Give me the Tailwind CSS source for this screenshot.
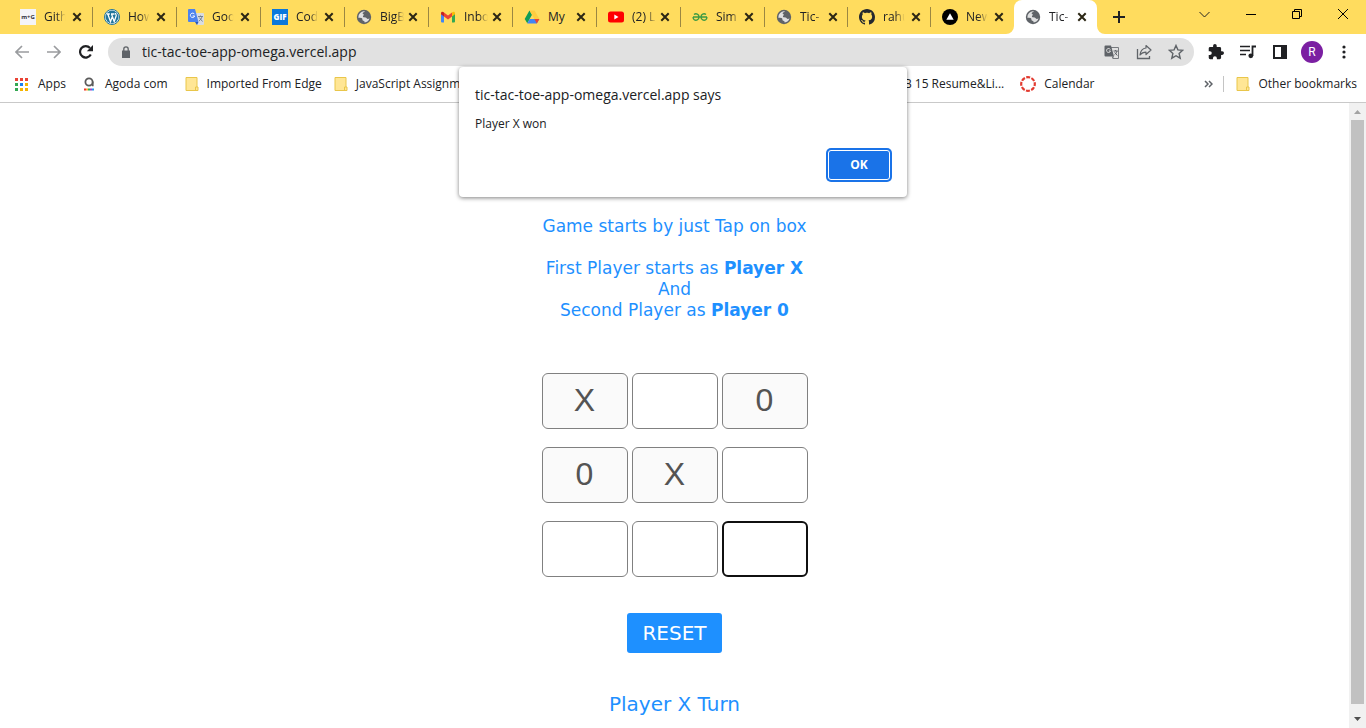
<!DOCTYPE html>
<html lang="en">
<head>
<meta charset="utf-8">
<meta name="viewport" content="width=device-width, initial-scale=1">
<title>Tic-Tac-Toe</title>
<script src="https://cdn.jsdelivr.net/npm/@tailwindcss/browser@4"></script>
</head>
<body class="relative flex h-screen flex-col overflow-hidden bg-white font-['Open_Sans',sans-serif] text-xs text-[#202124]">

<!-- Shared symbols -->
<svg class="hidden" aria-hidden="true">
  <symbol id="close" viewBox="0 0 10 10"><path d="M1.3 1.3l7.4 7.4M8.700 1.300l-7.400 7.400" stroke="#2b2614" stroke-width="2" fill="none"/></symbol>
  <symbol id="globe" viewBox="0 0 16 16"><circle cx="8" cy="8" r="7.200" fill="#5f6368"/><path d="M9 2.400C8.300 3.300 6.700 3.100 6.600 4.300c0 .9 1.200.7 1.200 1.500 0 .7-.9.8-.9 1.700 0 .8.900.9 2.200.9 1.200 0 1.700.6 1.900 1.400 1 .3 1.800 0 2.500-.5a5.700 5.700 0 0 1-4.900 4.300c.1-.9-.2-1.300-.7-1.600-.7-.4-1.600-.5-1.500-1.500 0-.8-.1-1.300-1-1.600-.9-.2-2-.2-3.100-.2A5.800 5.800 0 0 1 9 2.400z" fill="#fff" fill-opacity=".8"/></symbol>
  <symbol id="folder" viewBox="0 0 14 16"><path d="M1 1.500h11v9.500h1v3.500H1z" fill="#ffe695" stroke="#e9c64b"/><path d="M10.500 14.500v-3.500H12" fill="none" stroke="#e9c64b"/></symbol>
</svg>

<!-- Tab strip -->
<header class="flex h-[34px] shrink-0 items-stretch bg-[#ffdc5e] pl-[9px]">
  <nav class="flex shrink-0" aria-label="Tabs">
    <div class="flex w-21 items-center pl-[11px]">
      <svg class="size-4 shrink-0" viewBox="0 0 16 16"><path d="M0 0h16v16H0z" fill="#f4f4f8"/><text x="8" y="10" font-family="Open Sans" font-size="6" font-weight="700" text-anchor="middle" fill="#333340">m+G</text></svg>
      <a href="#" class="ml-2 w-6 overflow-hidden whitespace-nowrap [mask-image:linear-gradient(to_right,black_50%,transparent_90%)]">Gith</a>
      <button class="ml-1 shrink-0" aria-label="Close tab"><svg class="size-[10px]"><use href="#close"/></svg></button>
      <i class="ml-auto h-5 w-px bg-[#9b8742]"></i>
    </div>
    <div class="flex w-21 items-center pl-[11px]">
      <svg class="size-4 shrink-0" viewBox="0 0 16 16"><circle cx="8" cy="8" r="7.500" fill="#fff" stroke="#21759b"/><circle cx="8" cy="8" r="6.500" fill="#21759b"/><path d="M2.800 5h3M7 5h3.500M3.800 5l2.700 7.600L8 8.300M7.500 5l2.700 7.600 2-5.900c.3-1-.9-1.500-.6-2.700" fill="none" stroke="#fff" stroke-width="1.300"/></svg>
      <a href="#" class="ml-2 w-6 overflow-hidden whitespace-nowrap [mask-image:linear-gradient(to_right,black_50%,transparent_90%)]">How</a>
      <button class="ml-1 shrink-0" aria-label="Close tab"><svg class="size-[10px]"><use href="#close"/></svg></button>
      <i class="ml-auto h-5 w-px bg-[#9b8742]"></i>
    </div>
    <div class="flex w-21 items-center pl-[11px]">
      <svg class="size-4 shrink-0" viewBox="0 0 16 16"><path d="M6 4h9a1 1 0 0 1 1 1v10a1 1 0 0 1-1 1H9z" fill="#d9dce0"/><path d="M1 0h6l3.500 13H1a1 1 0 0 1-1-1V1a1 1 0 0 1 1-1z" fill="#4c83ee"/><path d="M9 16l1.500-3H7z" fill="#2457bd"/><path d="M6.500 5.200A2.200 2.200 0 1 0 6.700 7H4.600" fill="none" stroke="#fff"/><path d="M10 7.500h5M12.500 6.500v1M14 7.500c-.5 2-1.500 3.300-3 4.500M11.300 8.500l3.200 4" fill="none" stroke="#6b7a8c" stroke-width=".9"/></svg>
      <a href="#" class="ml-2 w-6 overflow-hidden whitespace-nowrap [mask-image:linear-gradient(to_right,black_60%,transparent_90%)]">Goo</a>
      <button class="ml-1 shrink-0" aria-label="Close tab"><svg class="size-[10px]"><use href="#close"/></svg></button>
      <i class="ml-auto h-5 w-px bg-[#9b8742]"></i>
    </div>
    <div class="flex w-21 items-center pl-[11px]">
      <svg class="size-4 shrink-0" viewBox="0 0 16 16"><path d="M0 0h16v16H0z" fill="#0a78dc"/><text x="8" y="11" font-family="Open Sans" font-size="8" font-weight="800" text-anchor="middle" fill="#fff">GIF</text></svg>
      <a href="#" class="ml-2 w-6 overflow-hidden whitespace-nowrap [mask-image:linear-gradient(to_right,black_60%,transparent_90%)]">Cod</a>
      <button class="ml-1 shrink-0" aria-label="Close tab"><svg class="size-[10px]"><use href="#close"/></svg></button>
      <i class="ml-auto h-5 w-px bg-[#9b8742]"></i>
    </div>
    <div class="flex w-21 items-center pl-[11px]">
      <svg class="size-4 shrink-0"><use href="#globe"/></svg>
      <a href="#" class="ml-2 w-6 overflow-hidden whitespace-nowrap [mask-image:linear-gradient(to_right,black_65%,transparent)]">BigB</a>
      <button class="ml-1 shrink-0" aria-label="Close tab"><svg class="size-[10px]"><use href="#close"/></svg></button>
      <i class="ml-auto h-5 w-px bg-[#9b8742]"></i>
    </div>
    <div class="flex w-21 items-center pl-[11px]">
      <svg class="size-4 shrink-0" viewBox="0 0 16 16"><path d="M1 4.500l3 2.200V13.500H2a1 1 0 0 1-1-1z" fill="#4285f4"/><path d="M15 4.500l-3 2.200V13.500h2a1 1 0 0 0 1-1z" fill="#34a853"/><path d="M4 3.500l4 3 4-3v4l-4 3-4-3z" fill="#ea4335"/><path d="M1 4.200C1 2.700 2.700 2.200 4 3.500v4L1 5.300z" fill="#c5221f"/><path d="M15 4.200c0-1.500-1.700-2-3-.7v4l3-2.200z" fill="#fbbc04"/></svg>
      <a href="#" class="ml-2 w-6 overflow-hidden whitespace-nowrap [mask-image:linear-gradient(to_right,black_60%,transparent)]">Inbo</a>
      <button class="ml-1 shrink-0" aria-label="Close tab"><svg class="size-[10px]"><use href="#close"/></svg></button>
      <i class="ml-auto h-5 w-px bg-[#9b8742]"></i>
    </div>
    <div class="flex w-21 items-center pl-[11px]">
      <svg class="size-4 shrink-0" viewBox="0 0 16 16"><path d="M5.500 1.500L8 5.800 3.300 14.300.7 10z" fill="#0f9d58"/><path d="M5.500 1.500h5L15.400 10h-5z" fill="#ffcd40"/><path d="M5.700 10h9.700l-2.600 4.500H3.200z" fill="#4285f4"/><path d="M10.400 10h5l-2.600 4.500z" fill="#ea4335"/></svg>
      <a href="#" class="ml-2 w-6 whitespace-nowrap">My</a>
      <button class="ml-1 shrink-0" aria-label="Close tab"><svg class="size-[10px]"><use href="#close"/></svg></button>
      <i class="ml-auto h-5 w-px bg-[#9b8742]"></i>
    </div>
    <div class="flex w-21 items-center pl-[11px]">
      <svg class="size-4 shrink-0" viewBox="0 0 16 16"><rect y="2.500" width="16" height="11" rx="2.500" fill="#f00"/><path d="M6.300 5.500v5l4.200-2.500z" fill="#fff"/></svg>
      <a href="#" class="ml-2 w-6 overflow-hidden whitespace-nowrap [mask-image:linear-gradient(to_right,black_60%,transparent)]">(2) L</a>
      <button class="ml-1 shrink-0" aria-label="Close tab"><svg class="size-[10px]"><use href="#close"/></svg></button>
      <i class="ml-auto h-5 w-px bg-[#9b8742]"></i>
    </div>
    <div class="flex w-21 items-center pl-[11px]">
      <svg class="size-4 shrink-0" viewBox="0 0 16 16"><path d="M1 8h14M2 5.500c2-1.500 5-.5 5 2.500s-3 4-5 2.500C1.400 10 1.100 9 1.100 8M14 5.500c-2-1.500-5-.5-5 2.500s3 4 5 2.500c.6-.5.9-1.500.9-2.500" fill="none" stroke="#3c9a43" stroke-width="1.400"/></svg>
      <a href="#" class="ml-2 w-6 overflow-hidden whitespace-nowrap [mask-image:linear-gradient(to_right,black_60%,transparent)]">Sim</a>
      <button class="ml-1 shrink-0" aria-label="Close tab"><svg class="size-[10px]"><use href="#close"/></svg></button>
      <i class="ml-auto h-5 w-px bg-[#9b8742]"></i>
    </div>
    <div class="flex w-[83px] items-center pl-[11px]">
      <svg class="size-4 shrink-0"><use href="#globe"/></svg>
      <a href="#" class="ml-2 w-6 overflow-hidden whitespace-nowrap [mask-image:linear-gradient(to_right,black_60%,transparent)]">Tic-</a>
      <button class="ml-1 shrink-0" aria-label="Close tab"><svg class="size-[10px]"><use href="#close"/></svg></button>
      <i class="ml-auto h-5 w-px bg-[#9b8742]"></i>
    </div>
    <div class="flex w-[83px] items-center pl-[11px]">
      <svg class="size-4 shrink-0" viewBox="0 0 16 16"><path fill="#24292f" d="M8 0C3.580 0 0 3.580 0 8c0 3.540 2.290 6.530 5.470 7.590.4.070.55-.17.55-.38 0-.19-.01-.82-.01-1.490-2.010.37-2.530-.49-2.690-.94-.09-.23-.48-.94-.82-1.130-.28-.15-.68-.52-.01-.53.63-.01 1.080.58 1.230.82.720 1.210 1.870.87 2.330.66.070-.52.280-.87.510-1.070-1.780-.2-3.640-.89-3.640-3.950 0-.87.310-1.590.820-2.150-.08-.2-.36-1.020.080-2.120 0 0 .67-.21 2.200.82.640-.18 1.320-.27 2-.27s1.360.09 2 .27c1.530-1.040 2.200-.82 2.200-.82.440 1.100.160 1.920.080 2.120.510.560.820 1.270.820 2.150 0 3.070-1.870 3.750-3.650 3.950.290.250.540.730.540 1.480 0 1.070-.01 1.930-.01 2.200 0 .21.150.46.550.38A8.010 8.010 0 0 0 16 8c0-4.420-3.580-8-8-8z"/></svg>
      <a href="#" class="ml-2 w-6 overflow-hidden whitespace-nowrap [mask-image:linear-gradient(to_right,black_50%,transparent_90%)]">rahu</a>
      <button class="ml-1 shrink-0" aria-label="Close tab"><svg class="size-[10px]"><use href="#close"/></svg></button>
      <i class="ml-auto h-5 w-px bg-[#9b8742]"></i>
    </div>
    <div class="relative flex w-[83px] items-center pl-[11px]">
      <svg class="size-4 shrink-0" viewBox="0 0 16 16"><circle cx="8" cy="8" r="8" fill="#000"/><path d="M8 4.300l3.700 6.400H4.300z" fill="#fff"/></svg>
      <a href="#" class="ml-2 w-6 overflow-hidden whitespace-nowrap [mask-image:linear-gradient(to_right,black_50%,transparent_90%)]">New</a>
      <button class="ml-1 shrink-0" aria-label="Close tab"><svg class="size-[10px]"><use href="#close"/></svg></button>
      <svg class="absolute right-0 bottom-0 size-2" viewBox="0 0 8 8"><path d="M8 0v8H0a8 8 0 0 0 8-8z" fill="#fff"/></svg>
    </div>
    <div class="relative flex w-[83px] items-center rounded-t-lg bg-white pl-[11px]">
      <svg class="size-4 shrink-0"><use href="#globe"/></svg>
      <a href="#" class="ml-2 w-6 overflow-hidden whitespace-nowrap [mask-image:linear-gradient(to_right,black_60%,transparent)]">Tic-</a>
      <button class="ml-1 shrink-0" aria-label="Close tab"><svg class="size-[10px]"><use href="#close"/></svg></button>
      <svg class="absolute bottom-0 left-full size-2" viewBox="0 0 8 8"><path d="M0 0v8h8a8 8 0 0 1-8-8z" fill="#fff"/></svg>
    </div>
  </nav>
  <button class="ml-4 flex items-center" aria-label="New tab"><svg class="size-3" viewBox="0 0 12 12"><path d="M6 0v12M0 6h12" stroke="#202124" stroke-width="2"/></svg></button>
  <div class="ml-auto flex h-7 items-center gap-9 pr-[18px]">
    <button aria-label="Search tabs"><svg class="size-[11px]" viewBox="0 0 11 11"><path d="M.5 3l5 5 5-5" fill="none" stroke="#222"/></svg></button>
    <button aria-label="Minimize"><svg class="size-[10px]" viewBox="0 0 10 10"><path d="M0 5.500h10" stroke="#000"/></svg></button>
    <button aria-label="Restore"><svg class="size-[10px]" viewBox="0 0 10 10"><path d="M.5 2.500h7v7h-7zM2.500 2.500v-2h7v7h-2" fill="none" stroke="#000"/></svg></button>
    <button aria-label="Close window"><svg class="size-[10px]" viewBox="0 0 10 10"><path d="M0 0l10 10M10 0L0 10" stroke="#000"/></svg></button>
  </div>
</header>

<!-- Toolbar -->
<div class="flex h-9 shrink-0 items-center pr-4 pl-[15px]">
  <button aria-label="Back"><svg class="size-[14px]" viewBox="0 0 14 14"><path d="M14 7H1.500M7 1L1 7l6 6" fill="none" stroke="#9a9c9f" stroke-width="1.700"/></svg></button>
  <button class="ml-[18px]" aria-label="Forward"><svg class="size-[14px]" viewBox="0 0 14 14"><path d="M0 7h12.500M7 1l6 6-6 6" fill="none" stroke="#9a9c9f" stroke-width="1.700"/></svg></button>
  <button class="ml-[18px]" aria-label="Reload"><svg class="size-[14px]" viewBox="0 0 14 14"><path d="M11.800 9.500A5.700 5.700 0 1 1 11 3" fill="none" stroke="#202124" stroke-width="2.200"/><path d="M14 0v6.200H7.800z" fill="#202124"/></svg></button>
  <div class="ml-[15px] flex h-7 flex-1 items-center rounded-full bg-[#e1e1e1] pr-[10px] pl-[14px]">
    <svg class="h-3 w-2 shrink-0" viewBox="0 0 8 12"><path d="M0 4.500h8V12H0z" fill="#5f6368"/><path d="M1.800 5V3a2.200 2.200 0 0 1 4.400 0v2" fill="none" stroke="#5f6368" stroke-width="1.300"/></svg>
    <input aria-label="Address" value="tic-tac-toe-app-omega.vercel.app" class="ml-3 min-w-0 flex-1 bg-transparent text-sm outline-none">
    <div class="flex items-center gap-4">
      <button aria-label="Translate"><svg class="size-4" viewBox="0 0 16 16"><path d="M6 3.500h8.500v11H9" fill="none" stroke="#777a7e"/><path d="M1.500 1.500h5.500l3 11H1.500a1 1 0 0 1-1-1v-9a1 1 0 0 1 1-1z" fill="#5f6368"/><path d="M8 12.500h2l-1.500 2.500z" fill="#5f6368"/><path d="M6.300 5.500A2 2 0 1 0 6.500 7H4.800" fill="none" stroke="#e1e1e1"/><path d="M9.500 7h4.300M11.600 6v1M13 7c-.4 1.800-1.500 3-2.500 3.800M10.700 8.300l2.600 3.200" fill="none" stroke="#5f6368"/></svg></button>
      <button aria-label="Share"><svg class="size-4" viewBox="0 0 16 16"><path d="M1.500 5v9.500h12V12" fill="none" stroke="#5f6368" stroke-width="1.300"/><path d="M10 1.500L15 6l-5 4.500V8.200C7.200 8.200 5.500 9 4 11c.4-3.500 2.300-6.600 6-7z" fill="none" stroke="#5f6368" stroke-width="1.200" stroke-linejoin="round"/></svg></button>
      <button aria-label="Bookmark"><svg class="size-4" viewBox="0 0 16 16"><path d="M8 1.500l1.900 4.400 4.800.4-3.600 3.200 1.100 4.700L8 11.700l-4.200 2.500 1.100-4.700L1.300 6.300l4.800-.4z" fill="none" stroke="#5f6368" stroke-width="1.400"/></svg></button>
    </div>
  </div>
  <div class="ml-[14px] flex items-center gap-4">
    <button aria-label="Extensions"><svg class="size-4" viewBox="1 1 22 22"><path d="M20.500 11H19V7a2 2 0 0 0-2-2h-4V3.500a2.500 2.500 0 0 0-5 0V5H4a2 2 0 0 0-2 2v3.800h1.500a2.700 2.700 0 0 1 0 5.400H2V20a2 2 0 0 0 2 2h3.800v-1.500a2.700 2.700 0 0 1 5.400 0V22H17a2 2 0 0 0 2-2v-4h1.500a2.500 2.500 0 0 0 0-5z" fill="#202124"/></svg></button>
    <button aria-label="Media"><svg class="size-4" viewBox="0 0 16 16"><path d="M0 2.500h10M0 6.500h10M0 10.500h6" stroke="#202124" stroke-width="1.700"/><path d="M12.500 12V2.500H16" fill="none" stroke="#202124" stroke-width="1.800"/><circle cx="10.800" cy="11.800" r="2.400" fill="#202124"/></svg></button>
    <button aria-label="Side panel"><svg class="size-4" viewBox="0 0 16 16"><path d="M1 1h14v14H1z" fill="#202124"/><path d="M3 3h6v10H3z" fill="#fff"/></svg></button>
    <button class="-ml-[3px] flex size-[22px] items-center justify-center rounded-full bg-[#7b1fa2] font-[Roboto] text-xs text-white" aria-label="Profile">R</button>
    <button class="-ml-px" aria-label="Menu"><svg class="h-[14px] w-3" viewBox="0 0 12 14"><g fill="#202124"><circle cx="6" cy="2" r="1.600"/><circle cx="6" cy="7" r="1.600"/><circle cx="6" cy="12" r="1.600"/></g></svg></button>
  </div>
</div>

<!-- Bookmarks bar -->
<nav class="flex h-[33px] shrink-0 items-center border-b border-[#c9c9c9] pr-[9px] pb-1 pl-[15px] whitespace-nowrap" aria-label="Bookmarks">
  <a href="#" class="flex items-center gap-[10px]"><svg class="size-[13px]" viewBox="0 0 13 13"><path d="M0 0h3v3H0zM5 0h3v3H5zM10 0h3v3h-3z" fill="#ea4335"/><path d="M0 5h3v3H0zM0 10h3v3H0z" fill="#34a853"/><path d="M5 5h3v3H5z" fill="#1a80ee"/><path d="M10 5h3v3h-3zM5 10h3v3H5zM10 10h3v3h-3z" fill="#f5b400"/></svg>Apps</a>
  <a href="#" class="ml-[17px] flex items-center gap-[10px]"><svg class="h-[14px] w-3" viewBox="0 0 12 14"><circle cx="6" cy="5" r="3.600" fill="none" stroke="#5a5a5a" stroke-width="1.800"/><path d="M9.800 4.500v4.700" stroke="#5a5a5a" stroke-width="1.600"/><path d="M1 12.500h2" stroke="#e33" stroke-width="2"/><path d="M3 12.500h2" stroke="#fa3" stroke-width="2"/><path d="M5 12.500h2" stroke="#3a5" stroke-width="2"/><path d="M7 12.500h2" stroke="#94c" stroke-width="2"/><path d="M9 12.500h2" stroke="#29e" stroke-width="2"/></svg>Agoda com</a>
  <a href="#" class="ml-[17px] flex items-center gap-2"><svg class="h-4 w-[14px]"><use href="#folder"/></svg>Imported From Edge</a>
  <a href="#" class="ml-3 flex items-center gap-2"><svg class="h-4 w-[14px]"><use href="#folder"/></svg>JavaScript Assignm...</a>
  <a href="#" class="ml-auto">FEB 15 Resume&amp;Li...</a>
  <a href="#" class="ml-4 flex items-center gap-2"><svg class="size-4" viewBox="0 0 16 16"><circle cx="8" cy="8" r="6.800" fill="none" stroke="#e23b30" stroke-width="2.200" stroke-dasharray="4 1.340" stroke-dashoffset="2"/></svg>Calendar</a>
  <button class="ml-[110px]" aria-label="More bookmarks"><svg class="h-2 w-[9px]" viewBox="0 0 9 8"><path d="M1 1l3 3-3 3M5 1l3 3-3 3" fill="none" stroke="#5f6368" stroke-width="1.500"/></svg></button>
  <i class="ml-[10px] h-4 w-px bg-[#c4c4c4]"></i>
  <a href="#" class="ml-3 flex items-center gap-2"><svg class="h-4 w-[14px]"><use href="#folder"/></svg>Other bookmarks</a>
</nav>

<!-- Page -->
<div class="flex min-h-0 flex-1">
  <main class="flex flex-1 flex-col items-center overflow-hidden pt-[113px] font-[Verdana,'DejaVu_Sans',sans-serif] text-[#1e90ff]">
    <div class="text-center text-[17px] leading-[21px]">
      <p>Game starts by just Tap on box</p>
      <p class="mt-[21px]">First Player starts as <b>Player X</b><br>And<br>Second Player as <b>Player 0</b></p>
    </div>
    <div class="mt-[52px] grid grid-cols-3 gap-x-1 gap-y-[18px] font-['Liberation_Sans',sans-serif] text-[32px] text-[#545454]">
      <button disabled aria-label="Box 1: X" class="h-14 w-[86px] rounded-md border border-[#808080] bg-[#fafafa] pb-0.5">X</button>
      <button aria-label="Box 2" class="h-14 w-[86px] rounded-md border border-[#808080]"></button>
      <button disabled aria-label="Box 3: 0" class="h-14 w-[86px] rounded-md border border-[#808080] bg-[#fafafa] pb-0.5">0</button>
      <button disabled aria-label="Box 4: 0" class="h-14 w-[86px] rounded-md border border-[#808080] bg-[#fafafa] pb-0.5">0</button>
      <button disabled aria-label="Box 5: X" class="h-14 w-[86px] rounded-md border border-[#808080] bg-[#fafafa] pb-0.5">X</button>
      <button aria-label="Box 6" class="h-14 w-[86px] rounded-md border border-[#808080]"></button>
      <button aria-label="Box 7" class="h-14 w-[86px] rounded-md border border-[#808080]"></button>
      <button aria-label="Box 8" class="h-14 w-[86px] rounded-md border border-[#808080]"></button>
      <button aria-label="Box 9" class="h-14 w-[86px] rounded-md border-2 border-[#101010]"></button>
    </div>
    <button class="mt-9 h-10 rounded-[3px] bg-[#1e90ff] px-[15px] text-xl text-white">RESET</button>
    <p class="mt-[37px] text-xl leading-7">Player X Turn</p>
  </main>
  <div class="flex w-[17px] flex-col items-center bg-[#f1f1f1]" aria-hidden="true">
    <svg class="size-[17px]" viewBox="0 0 17 17"><path d="M5 11l3.500-4 3.500 4z" fill="#a3a3a3"/></svg>
    <div class="mb-[7px] w-[13px] flex-1 bg-[#c1c1c1]"></div>
    <svg class="size-[17px]" viewBox="0 0 17 17"><path d="M5 6l3.500 4 3.500-4z" fill="#505050"/></svg>
  </div>
</div>

<!-- Alert -->
<div role="alertdialog" aria-labelledby="alert-title" aria-describedby="alert-text" class="absolute top-[67px] left-1/2 flex w-[448px] -translate-x-1/2 flex-col rounded bg-white p-4 shadow-[0_1px_4px_rgba(0,0,0,0.5)]">
  <h1 id="alert-title" class="text-sm leading-6">tic-tac-toe-app-omega.vercel.app says</h1>
  <p id="alert-text" class="mt-2 leading-[18px]">Player X won</p>
  <button class="m-px mt-[17px] h-[30px] w-[62px] self-end rounded-[3px] border border-white bg-[#1a73e8] text-xs font-bold text-white ring-2 ring-[#1a73e8]">OK</button>
</div>
</body>
</html>
